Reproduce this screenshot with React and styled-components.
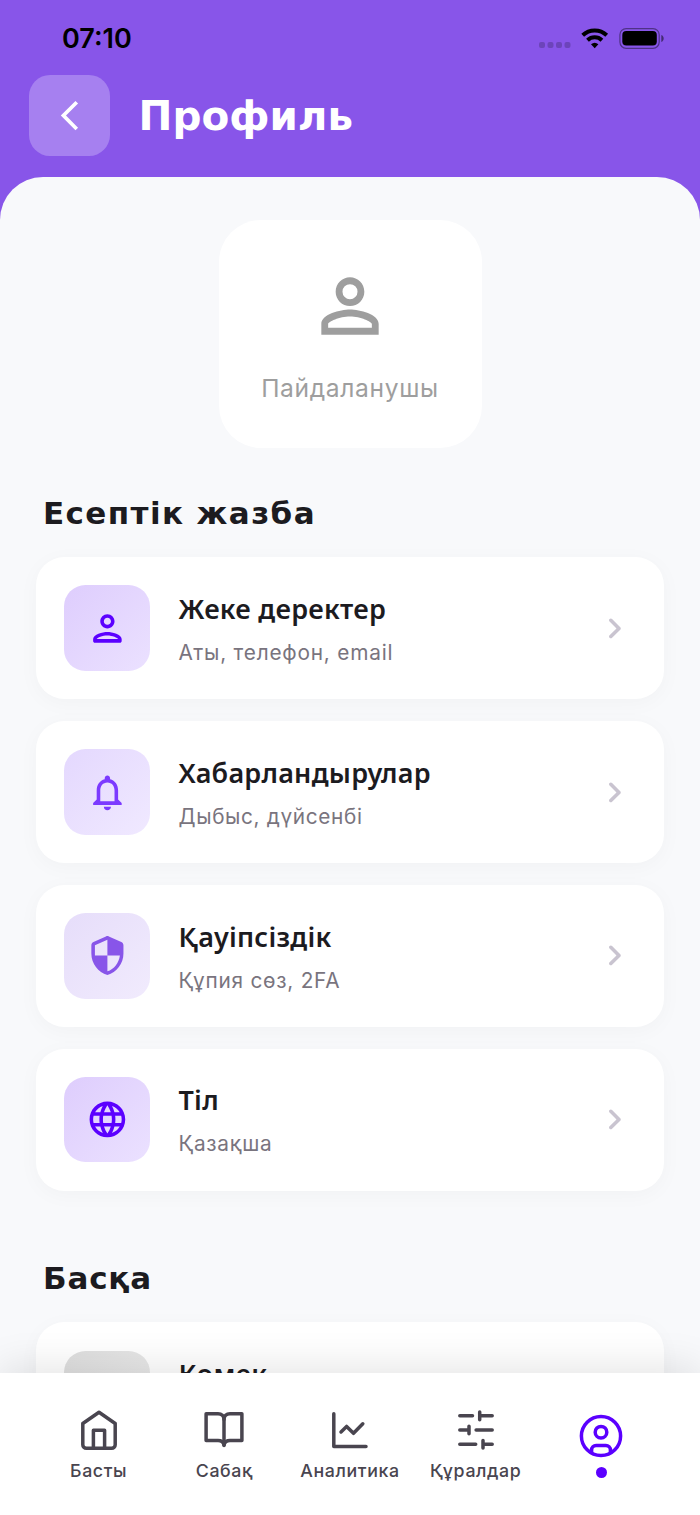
import React, {useState} from 'react'
import styled, {createGlobalStyle} from 'styled-components'
import {MdArrowBackIosNew, MdPersonOutline, MdNotificationsNone, MdLanguage} from 'react-icons/md'

const account = [
    {icon: 'person', title: 'Жеке деректер', text: 'Аты, телефон, email', color: '#5b00ff', from: '#decdfd', to: '#ebe1ff', subLs: 0.8},
    {icon: 'bell', title: 'Хабарландырулар', text: 'Дыбыс, дүйсенбі', color: '#7c3aff', from: '#e4d8fe', to: '#f0e9ff', subLs: 0.65},
    {icon: 'shield', title: 'Қауіпсіздік', text: 'Құпия сөз, 2FA', color: '#8855e9', from: '#e6ddfa', to: '#f1ebfd', subLs: 0.75},
    {icon: 'globe', title: 'Тіл', text: 'Қазақша', color: '#5b00ff', from: '#decdfd', to: '#ebe1ff', subLs: 0.75},
]

const tabs = [
    {id: 'home', label: 'Басты'},
    {id: 'book', label: 'Сабақ'},
    {id: 'chart', label: 'Аналитика'},
    {id: 'tools', label: 'Құралдар'},
    {id: 'profile', label: ''},
]

const PersonIcon = () => (
    <svg width="42.8" height="42.8" viewBox="0 0 24 24" fill="currentColor">
        <path d="M12 12c2.21 0 4-1.79 4-4s-1.79-4-4-4-4 1.79-4 4 1.79 4 4 4zm0-6c1.1 0 2 .9 2 2s-.9 2-2 2-2-.9-2-2 .9-2 2-2zm0 8c-2.67 0-8 1.34-8 4v1c0 .55.45 1 1 1h14c.55 0 1-.45 1-1v-1c0-2.66-5.33-4-8-4zm6 4H6v-.01c.2-.72 3.3-1.99 6-1.99s5.8 1.29 6 2z"/>
    </svg>
)

const ShieldIcon = () => (
    <svg width="42.8" height="42.8" viewBox="0 0 24 24" fill="currentColor">
        <path d="M11.19 1.36l-7 3.11C3.47 4.79 3 5.51 3 6.3V11c0 5.55 3.84 10.74 9 12 5.16-1.26 9-6.45 9-12V6.3c0-.79-.47-1.51-1.19-1.83l-7-3.11c-.51-.23-1.11-.23-1.62 0zM12 11.99h7c-.53 4.12-3.28 7.79-7 8.94V12H5V6.3l7-3.11v8.8z"/>
    </svg>
)

const Chevron = () => (
    <svg width="42.8" height="42.8" viewBox="0 0 24 24" fill="#c9c4d0">
        <path d="M9.29 6.71c-.39.39-.39 1.02 0 1.41L13.17 12l-3.88 3.88c-.39.39-.39 1.02 0 1.41.39.39 1.02.39 1.41 0l4.59-4.59c.39-.39.39-1.02 0-1.41L10.7 6.7c-.38-.38-1.02-.38-1.41.01z"/>
    </svg>
)

const rowIcons = {
    person: <PersonIcon/>,
    bell: <MdNotificationsNone size={42.8}/>,
    shield: <ShieldIcon/>,
    globe: <MdLanguage size={42.8}/>,
}

const tabIcons = {
    home: (
        <>
            <path d="M5.8 15.5 22 4.2l16.2 11.3v21.2a3.5 3.5 0 0 1-3.5 3.5H9.3a3.5 3.5 0 0 1-3.5-3.5z"/>
            <path d="M16.4 40V22.3h11.2V40"/>
        </>
    ),
    book: (
        <>
            <path d="M22 11.5c0-3.4-2.3-5.8-6-5.8H4.1v26.9H16c3.6 0 5.4 1.4 6 4.3.6-2.9 2.4-4.3 6-4.3h11.9V5.7H28c-3.7 0-6 2.4-6 5.8z"/>
            <path d="M22 11v26.5"/>
        </>
    ),
    chart: (
        <>
            <path d="M5.8 5.7v32.9h32.2"/>
            <path d="m13 23.9 5.6-5.5 6.9 6.9 9.3-9.5"/>
        </>
    ),
    tools: (
        <>
            <path d="M5.8 7.7h12.7M25.7 4v7.7M25.7 7.7h12.5"/>
            <path d="M5.8 22h9.2M15 18.2v7.6M22.1 22h16.1"/>
            <path d="M5.8 36.3h15.9M29 32.5v7.6M29 36.3h9.2"/>
        </>
    ),
    profile: (
        <>
            <circle cx="22" cy="22" r="19.6"/>
            <circle cx="22" cy="18.2" r="5.8"/>
            <path d="M12.6 38.5V36a4.5 4.5 0 0 1 4.5-4.5h9.8a4.5 4.5 0 0 1 4.5 4.5v2.5"/>
        </>
    ),
}

const StatusIcons = () => (
    <svg width="128" height="24" viewBox="538 26 128 24">
        <g fill="#000" fillOpacity=".2">
            <rect x="539" y="42" width="6" height="6" rx="2"/>
            <rect x="547.5" y="42" width="6" height="6" rx="2"/>
            <rect x="556" y="42" width="6" height="6" rx="2"/>
            <rect x="564.5" y="42" width="6" height="6" rx="2"/>
        </g>
        <g fill="none" stroke="#000" strokeWidth="4">
            <path d="M582.7 35.3a17.3 17.3 0 0 1 24 0"/>
            <path d="M587.5 40.2a10.4 10.4 0 0 1 14.4 0"/>
        </g>
        <path d="M591 44.3a5.6 5.6 0 0 1 7.4 0l-3.7 3.9z"/>
        <rect x="619.9" y="28.6" width="39.3" height="19.7" rx="6.2" fill="none" stroke="#000" strokeOpacity=".42" strokeWidth="1.2"/>
        <rect x="622.3" y="31" width="34.5" height="14.5" rx="4"/>
        <path d="M661.3 35v7c3.2-1.2 3.2-5.8 0-7z" fillOpacity=".5"/>
    </svg>
)

const App = () => {

    const [tab, setTab] = useState('profile')

    return (
        <Screen>
            <GlobalStyle/>
            <StatusBar>
                <Time>07:10</Time>
                <StatusIcons/>
            </StatusBar>
            <Header>
                <BackButton>
                    <MdArrowBackIosNew size={35.2}/>
                </BackButton>
                <PageTitle>Профиль</PageTitle>
            </Header>
            <Content>
                <UserCard>
                    <MdPersonOutline size={86}/>
                    <UserName>Пайдаланушы</UserName>
                </UserCard>
                <SectionTitle $ls={1.4}>Есептік жазба</SectionTitle>
                <List>
                    {account.map((item) => (
                        <Row key={item.title}>
                            <Tile $color={item.color} $from={item.from} $to={item.to}>{rowIcons[item.icon]}</Tile>
                            <RowText>
                                <RowTitle>{item.title}</RowTitle>
                                <RowSub $ls={item.subLs}>{item.text}</RowSub>
                            </RowText>
                            <Chevron/>
                        </Row>
                    ))}
                </List>
                <SectionTitle $second $ls={0.8}>Басқа</SectionTitle>
                <List>
                    <Row>
                        <Tile $from="#dedede" $to="#eeeeee"/>
                        <RowText>
                            <RowTitle>Көмек</RowTitle>
                        </RowText>
                        <Chevron/>
                    </Row>
                </List>
            </Content>
            <TabBar>
                {tabs.map((t) => (
                    <Tab key={t.id} $active={tab === t.id} onClick={() => setTab(t.id)}>
                        <TabIcon viewBox="0 0 44 44">{tabIcons[t.id]}</TabIcon>
                        {t.label ? <TabLabel>{t.label}</TabLabel> : <Dot/>}
                    </Tab>
                ))}
            </TabBar>
        </Screen>
    )
}

const GlobalStyle = createGlobalStyle`
    * {
        box-sizing: border-box;
    }

    body {
        margin: 0;
        background: #8855e9;
        font-family: Inter, "Liberation Sans", sans-serif;
    }

    button {
        border: 0;
        padding: 0;
        background: none;
        font: inherit;
        cursor: pointer;
    }

    svg {
        display: block;
        flex-shrink: 0;
    }
`

const Screen = styled.div`
    display: flex;
    flex-direction: column;
    width: 700px;
    height: 1515px;
    overflow: hidden;
    background: #8855e9;
`

const StatusBar = styled.div`
    display: flex;
    justify-content: space-between;
    align-items: center;
    height: 74.5px;
    padding: 1px 34px 0 62px;
    flex-shrink: 0;
`

const Time = styled.span`
    padding-top: 2px;
    font-size: 27px;
    font-weight: 600;
    line-height: 32px;
    color: #000;
`

const Header = styled.header`
    display: flex;
    align-items: center;
    gap: 29px;
    height: 102.5px;
    padding: 0 28.5px 21.5px;
    flex-shrink: 0;
`

const BackButton = styled.button`
    display: flex;
    align-items: center;
    justify-content: center;
    width: 81px;
    height: 81px;
    padding: 1px 0 0 1px;
    border-radius: 21px;
    background: #a680f0;
    color: #fff;
`

const PageTitle = styled.h1`
    margin: 0;
    padding-top: 2px;
    font-family: "DejaVu Sans", sans-serif;
    font-size: 40.5px;
    font-weight: 700;
    line-height: 50px;
    color: #fff;
`

const Content = styled.main`
    flex: 1;
    min-height: 0;
    overflow: hidden;
    padding: 42.5px 36px 0;
    border-radius: 43px 43px 0 0;
    background: #f8f9fb;
`

const UserCard = styled.div`
    display: flex;
    flex-direction: column;
    align-items: center;
    width: 263px;
    height: 228px;
    margin: 0 auto;
    padding-top: 43px;
    border-radius: 42px;
    background: #fff;
    color: #9e9e9e;
`

const UserName = styled.div`
    margin-top: 23px;
    font-size: 24.6px;
    line-height: 32px;
    letter-spacing: 0.65px;
`

const SectionTitle = styled.h2`
    margin: ${({$second}) => $second ? '67px' : '45px'} 0 24.5px 7px;
    font-family: "DejaVu Sans", sans-serif;
    font-size: 31px;
    font-weight: 700;
    line-height: 40px;
    letter-spacing: ${({$ls}) => $ls}px;
    color: #1c1b1f;
`

const List = styled.div`
    display: flex;
    flex-direction: column;
    gap: 21.7px;
`

const Row = styled.div`
    display: flex;
    align-items: center;
    height: 142.2px;
    padding: 0 28.3px;
    border-radius: 28.5px;
    background: #fff;
    box-shadow: 0 4px 21px rgba(0, 0, 0, 0.03);
`

const Tile = styled.div`
    display: flex;
    align-items: center;
    justify-content: center;
    width: 85.5px;
    height: 85.5px;
    border-radius: 21.4px;
    background: linear-gradient(135deg, ${({$from}) => $from}, ${({$to}) => $to});
    color: ${({$color}) => $color || '#757575'};
`

const RowText = styled.div`
    flex: 1;
    height: 85.5px;
    padding: 4.5px 0 0 28.7px;
`

const RowTitle = styled.div`
    font-family: "Noto Sans", sans-serif;
    font-size: 27px;
    font-weight: 600;
    line-height: 38px;
    letter-spacing: 0.25px;
    color: #1c1b1f;
`

const RowSub = styled.div`
    margin-top: 11px;
    font-size: 20.8px;
    line-height: 28px;
    letter-spacing: ${({$ls}) => $ls}px;
    color: #79747e;
`

const TabBar = styled.nav`
    position: relative;
    z-index: 1;
    display: flex;
    height: 142px;
    padding: 35px 35.8px 0;
    flex-shrink: 0;
    background: #fff;
    box-shadow: 0 -7px 36px rgba(0, 0, 0, 0.1);
`

const Tab = styled.button`
    display: flex;
    flex: 1;
    flex-direction: column;
    align-items: center;
    height: 80px;
    padding-top: ${({$active}) => $active ? '6px' : '0'};
    color: ${({$active}) => $active ? '#5b00ff' : '#49454f'};
`

const TabIcon = styled.svg`
    width: 44px;
    height: 44px;
    fill: none;
    stroke: currentColor;
    stroke-width: 3.5;
    stroke-linecap: round;
    stroke-linejoin: round;
`

const TabLabel = styled.span`
    margin-top: 6.8px;
    font-size: 17.8px;
    font-weight: 450;
    line-height: 24px;
    letter-spacing: 0.6px;
    white-space: nowrap;
`

const Dot = styled.span`
    width: 11px;
    height: 11px;
    margin-top: 9px;
    border-radius: 50%;
    background: #5b00ff;
`

export default App
